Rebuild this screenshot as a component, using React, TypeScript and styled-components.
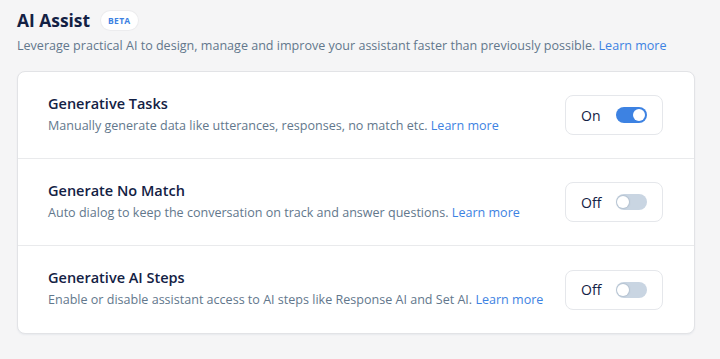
import React from "react";
import styled, { createGlobalStyle } from "styled-components";

const Global = createGlobalStyle`
  html, body { margin: 0; padding: 0; background: #f5f5f6; }
  body { font-family: "Open Sans", "Noto Sans", sans-serif; -webkit-font-smoothing: antialiased; }
`;

const Page = styled.div`
  padding: 7px 26px 0 17px;
  width: 720px;
  height: 359px;
  box-sizing: border-box;
`;

const Header = styled.div`
  display: flex;
  align-items: center;
  gap: 11px;
  height: 26px;
`;

const Title = styled.h1`
  margin: 0;
  font-size: 17.4px;
  font-weight: 700;
  color: #132144;
`;

const Badge = styled.span`
  display: inline-flex;
  align-items: center;
  justify-content: center;
  height: 19px;
  padding: 0 7px;
  border-radius: 10px;
  background: #ffffff;
  box-shadow: 0 0 0 1px #ececee;
  color: #3d82e2;
  font-size: 8.5px;
  font-weight: 700;
  letter-spacing: 0.3px;
`;

const Description = styled.p`
  margin: 3px 0 0;
  font-size: 12.55px;
  line-height: 20px;
  color: #62778c;
`;

const Link = styled.a`
  color: #3d82e2;
  text-decoration: none;
`;

const Card = styled.div`
  margin-top: 15px;
  background: #ffffff;
  border: 1px solid #e2e3e6;
  border-radius: 8px;
  box-shadow: 0 1px 2px rgba(17, 49, 96, 0.06);
  width: 678px;
  box-sizing: border-box;
`;

const Row = styled.div<{ $last?: boolean }>`
  display: flex;
  align-items: center;
  justify-content: space-between;
  height: 87px;
  padding: 0 31px 0 30px;
  box-sizing: border-box;
  border-bottom: ${(p) => (p.$last ? "none" : "1px solid #e9eaec")};
`;

const RowText = styled.div`
  display: flex;
  flex-direction: column;
  gap: 2px;
  margin-top: -1px;
`;

const RowTitle = styled.div`
  font-size: 14.5px;
  font-weight: 600;
  line-height: 20px;
  color: #132144;
`;

const RowDesc = styled.div`
  font-size: 12.55px;
  line-height: 20px;
  color: #62778c;
`;

const ToggleBox = styled.div`
  display: flex;
  align-items: center;
  width: 98px;
  height: 40px;
  box-sizing: border-box;
  border: 1px solid #e5e7eb;
  border-radius: 8px;
  padding: 0 15px;
`;

const ToggleLabel = styled.span`
  font-size: 14px;
  color: #132144;
  width: 35px;
`;

const Switch = styled.span<{ $on: boolean }>`
  position: relative;
  display: inline-block;
  width: 31px;
  height: 16px;
  border-radius: 8px;
  background: ${(p) => (p.$on ? "#3d82e2" : "#c9d5e2")};
  &::after {
    content: "";
    position: absolute;
    top: 2px;
    left: ${(p) => (p.$on ? "17px" : "1px")};
    width: 12px;
    height: 12px;
    border-radius: 50%;
    background: #ffffff;
    box-shadow: ${(p) => (p.$on ? "none" : "0 0 1px 1px rgba(120,140,160,0.25)")};
  }
`;

const rows = [
  {
    title: "Generative Tasks",
    desc: "Manually generate data like utterances, responses, no match etc.",
    on: true,
  },
  {
    title: "Generate No Match",
    desc: "Auto dialog to keep the conversation on track and answer questions.",
    on: false,
  },
  {
    title: "Generative AI Steps",
    desc: "Enable or disable assistant access to AI steps like Response AI and Set AI.",
    on: false,
  },
];

export default function App() {
  return (
    <>
      <Global />
      <Page>
        <Header>
          <Title>AI Assist</Title>
          <Badge>BETA</Badge>
        </Header>
        <Description>
          Leverage practical AI to design, manage and improve your assistant faster than previously possible.{" "}
          <Link href="#">Learn more</Link>
        </Description>
        <Card>
          {rows.map((r, i) => (
            <Row key={r.title} $last={i === rows.length - 1}>
              <RowText>
                <RowTitle>{r.title}</RowTitle>
                <RowDesc>
                  {r.desc} <Link href="#">Learn more</Link>
                </RowDesc>
              </RowText>
              <ToggleBox>
                <ToggleLabel>{r.on ? "On" : "Off"}</ToggleLabel>
                <Switch $on={r.on} />
              </ToggleBox>
            </Row>
          ))}
        </Card>
      </Page>
    </>
  );
}
